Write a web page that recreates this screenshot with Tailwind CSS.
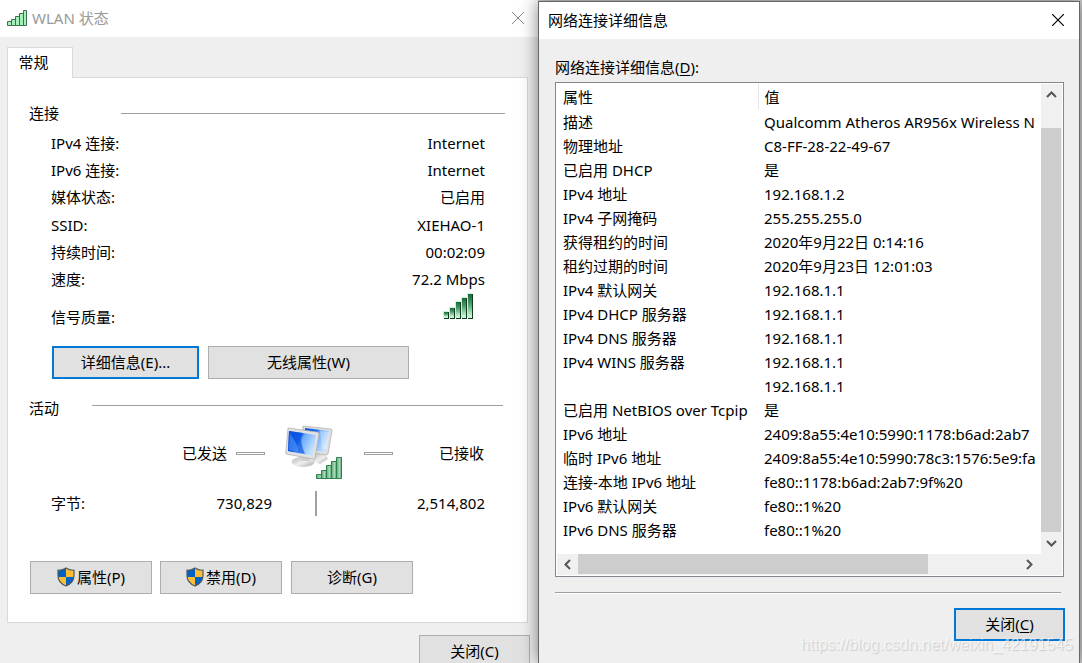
<!DOCTYPE html>
<html lang="zh-CN">
<head>
<meta charset="utf-8">
<title>WLAN 状态</title>
<script src="https://cdn.jsdelivr.net/npm/@tailwindcss/browser@4"></script>
</head>
<body class="relative flex h-screen overflow-hidden bg-[#d0d0d0] font-['Noto_Sans','Noto_Sans_CJK_SC',sans-serif] text-[15px] leading-6 text-black">
<svg class="absolute h-0 w-0" aria-hidden="true">
  <defs>
    <linearGradient id="bar" x1="0" y1="0" x2="0" y2="1"><stop offset="0" stop-color="#0f6b34"/><stop offset=".4" stop-color="#479a67"/><stop offset="1" stop-color="#d0ffdc"/></linearGradient>
    <linearGradient id="bar2" x1="0" y1="0" x2="1" y2="0"><stop offset="0" stop-color="#5aa878"/><stop offset=".6" stop-color="#a9dcb6"/><stop offset="1" stop-color="#4c9869"/></linearGradient>
    <linearGradient id="screen" x1="0" y1="0" x2="1" y2=".5"><stop offset="0" stop-color="#0a4fe0"/><stop offset=".45" stop-color="#1c6cf2"/><stop offset=".55" stop-color="#6cabff"/><stop offset="1" stop-color="#c5e2ff"/></linearGradient>
    <linearGradient id="stand" x1="0" y1="0" x2="1" y2="1"><stop offset="0" stop-color="#b2b2b2"/><stop offset=".5" stop-color="#efefef"/><stop offset="1" stop-color="#a8a8a8"/></linearGradient>
    <symbol id="shield" viewBox="0 0 18 20">
      <path d="M9 1C6.500 2.800 3.800 3.400 1 3.200V8.500C1 13.500 4 17 9 19Z" fill="#0063c4"/>
      <path d="M9 1C11.500 2.800 14.200 3.400 17 3.200V8.500C17 13.500 14 17 9 19Z" fill="#ffbd35"/>
      <path d="M1 10H9V19C4.800 17.400 1.500 14.500 1 10Z" fill="#ffbd35"/>
      <path d="M9 10H17C16.500 14.500 13.200 17.400 9 19Z" fill="#0063c4"/>
      <path d="M9 1C6.500 2.800 3.800 3.400 1 3.200V8.500C1 13.500 4 17 9 19C14 17 17 13.500 17 8.500V3.200C14.200 3.400 11.500 2.800 9 1Z" fill="none" stroke="#505a5e" stroke-width="1.200"/>
    </symbol>
  </defs>
</svg>

<main class="flex h-screen min-w-0 flex-1 basis-[538px] flex-col bg-[#efefef]">
  <header class="flex h-[37px] shrink-0 items-center bg-white pb-px pl-[7px] pr-[14px] text-[#999]">
    <svg class="h-4 w-5" viewBox="0 0 20 16"><g fill="#a4f0b8" stroke="#3f6f50" stroke-width="1"><path d="M.5 11.500h4v4h-4zM4.500 9.500h4v6h-4zM8.500 6.500h4v9h-4zM12.500 3.500h4v12h-4zM16.500 .5h3v15h-3z"/></g></svg>
    <h1 class="ml-[5px] flex-1">WLAN 状态</h1>
    <button type="button" aria-label="关闭窗口"><svg class="h-3 w-3" viewBox="0 0 12 12" stroke="#888"><path d="M0 0 12 12M12 0 0 12"/></svg></button>
  </header>

  <div class="mt-[10px] flex pl-[7px]" role="tablist">
    <button type="button" role="tab" aria-selected="true" class="z-10 -mb-px h-[31px] w-[66px] border border-b-0 border-[#d9d9d9] bg-white pb-0.5 pr-[13px] leading-none">常规</button>
  </div>

  <section class="ml-[7px] mr-[10px] h-[546px] shrink-0 border border-[#d9d9d9] bg-white pl-[21px] pr-[22px] pt-[23px]">
    <div class="flex items-center"><h2 class="w-[92px]">连接</h2><div class="h-px flex-1 bg-[#a0a0a0]"></div></div>
    <dl class="mt-1 grid h-[164px] grid-rows-6 items-center pl-[22px] pr-5">
      <div class="flex justify-between"><dt>IPv4 连接:</dt><dd>Internet</dd></div>
      <div class="flex justify-between"><dt>IPv6 连接:</dt><dd>Internet</dd></div>
      <div class="flex justify-between"><dt>媒体状态:</dt><dd>已启用</dd></div>
      <div class="flex justify-between"><dt>SSID:</dt><dd>XIEHAO-1</dd></div>
      <div class="flex justify-between"><dt>持续时间:</dt><dd>00:02:09</dd></div>
      <div class="flex justify-between"><dt>速度:</dt><dd>72.2 Mbps</dd></div>
    </dl>
    <div class="flex h-[53px] items-start justify-between pl-[22px] pr-[31px]">
      <span class="pt-3">信号质量:</span>
      <svg class="h-[26px] w-8" viewBox="0 0 32 26" role="img" aria-label="信号强"><path d="M2 19h5v7H2zM8 15h5v11H8zM14 9h5v17h-5zM20 5h5v21h-5zM26 1h5v25h-5z" fill="#183a25"/><path d="M1 18h5v7H1zM7 14h5v11H7zM13 8h5v17h-5zM19 4h5v21h-5zM25 0h5v25h-5z" fill="#c4f5d0"/><g fill="url(#bar)"><path d="M2 19h4v5H2z"/><path d="M8 15h4v9H8z"/><path d="M14 9h4v15h-4z"/><path d="M20 5h4v19h-4z"/><path d="M26 1h4v23h-4z"/></g></svg>
    </div>
    <div class="flex gap-[9px] pl-[23px]">
      <button type="button" class="h-[33px] w-[147px] border-2 border-[#0078d7] bg-[#e1e1e1] pb-0.5">详细信息(E)...</button>
      <button type="button" class="h-[33px] w-[201px] border border-[#adadad] bg-[#e1e1e1] pb-0.5">无线属性(W)</button>
    </div>

    <div class="mt-3 flex h-8 items-center"><h2 class="w-[63px] pt-0.5">活动</h2><div class="mb-1 mr-0.5 h-px flex-1 bg-[#a0a0a0]"></div></div>
    <div class="mt-px flex h-[58px] items-center pl-[153px] pr-[21px]">
      <span>已发送</span>
      <span class="ml-[9px] h-[3px] w-[29px] border border-[#a0a0a0]"></span>
      <svg class="ml-5 h-[58px] w-[58px]" viewBox="0 0 58 58" role="img" aria-label="网络活动">
        <path d="M30 29h10l3 6-8 5-7-3z" fill="url(#stand)"/>
        <path d="M18 2 46 5Q47 5 47 7L43 30Q42 31 40 31L17 27Z" fill="#dedede" stroke="#aaa" stroke-width=".7"/>
        <path d="M20 4 44 7 41 28 20 25Z" fill="url(#screen)"/>
        <path d="M35 7 44 8 42 26 37 25Z" fill="#fff" opacity=".3"/>
        <ellipse cx="18" cy="38" rx="11.500" ry="5" fill="url(#stand)"/>
        <path d="M16 29h9v8h-9z" fill="#cecece"/>
        <path d="M3 4 32 8Q34 8 34 10L30 35Q29 36 28 35L1 30Q0 29 1 27Z" fill="#e1e1e1" stroke="#aaa" stroke-width=".7"/>
        <path d="M4 7 31 11 28 32 3 27Z" fill="url(#screen)"/>
        <path d="M4 7 18 9C14 13 17 22 20 30L3 27Z" fill="#0950df" opacity=".65"/>
        <path d="M5 9C8 16 13 18 13 28L4 26Z" fill="#64adff" opacity=".45"/>
        <g fill="url(#bar2)" stroke="#2f8050" stroke-width="1"><path d="M31.500 50.500h6v4h-6z"/><path d="M36.500 46.500h5v8h-5z"/><path d="M41.500 41.500h5v13h-5z"/><path d="M46.500 37.500h5v17h-5z"/><path d="M51.500 33.500h5v21h-5z"/></g>
      </svg>
      <span class="ml-[21px] h-[3px] w-[29px] border border-[#a0a0a0]"></span>
      <span class="ml-auto">已接收</span>
    </div>
    <div class="mt-[7px] flex h-7 items-center pl-[22px] pr-5">
      <span class="w-[120px]">字节:</span>
      <span class="w-[101px] text-right">730,829</span>
      <span class="ml-[43px] h-[25px] w-0.5 bg-[#a0a0a0]"></span>
      <span class="ml-auto">2,514,802</span>
    </div>
    <div class="mt-11 flex gap-2 pl-px">
      <button type="button" class="flex h-[33px] w-[122px] items-center justify-center border border-[#adadad] bg-[#e1e1e1] pb-0.5"><svg class="mr-0.5 h-5 w-[18px]"><use href="#shield"/></svg>属性(P)</button>
      <button type="button" class="flex h-[33px] w-[122px] items-center justify-center border border-[#adadad] bg-[#e1e1e1] pb-0.5"><svg class="mr-0.5 h-5 w-[18px]"><use href="#shield"/></svg>禁用(D)</button>
      <button type="button" class="ml-px h-[33px] w-[122px] border border-[#adadad] bg-[#e1e1e1] pb-0.5">诊断(G)</button>
    </div>
  </section>
  <div class="mt-3 flex justify-end pr-2">
    <button type="button" class="h-[33px] w-[111px] border border-[#adadad] bg-[#e1e1e1] pb-0.5">关闭(C)</button>
  </div>
</main>

<aside class="z-10 mr-[2px] mt-px flex min-w-0 flex-1 basis-[542px] flex-col border border-b-0 border-[#666] bg-[#efefef] shadow-[0_0_16px_rgba(0,0,0,0.5)]">
  <header class="flex h-[37px] shrink-0 items-center justify-between bg-white pb-0.5 pl-[9px] pr-[15px]">
    <h2>网络连接详细信息</h2>
    <button type="button" aria-label="关闭对话框"><svg class="h-3 w-3" viewBox="0 0 12 12" stroke="#000" stroke-width="1.200"><path d="M0 0 12 12M12 0 0 12"/></svg></button>
  </header>
  <div class="flex flex-col pl-4 pr-[14px] pt-4">
    <h3 id="details">网络连接详细信息(<u class="underline-offset-2">D</u>):</h3>
    <div class="mr-px mt-[3px] grid h-[495px] grid-cols-[minmax(0,1fr)_21px] grid-rows-[minmax(0,1fr)_21px] border border-[#828790] bg-white p-px">
      <div class="overflow-hidden">
        <table aria-labelledby="details" class="w-full table-fixed whitespace-nowrap text-left">
          <thead><tr class="h-[26px]"><th class="w-[201px] border-r border-[#e5e5e5] p-0 pl-[6px] font-normal">属性</th><th class="p-0 pl-[6px] font-normal">值</th></tr></thead>
          <tbody class="[&_td]:h-6 [&_td]:p-0 [&_td]:pl-[6px]">
            <tr><td>描述</td><td>Qualcomm Atheros AR956x Wireless N</td></tr>
            <tr><td>物理地址</td><td>C8-FF-28-22-49-67</td></tr>
            <tr><td>已启用 DHCP</td><td>是</td></tr>
            <tr><td>IPv4 地址</td><td>192.168.1.2</td></tr>
            <tr><td>IPv4 子网掩码</td><td>255.255.255.0</td></tr>
            <tr><td>获得租约的时间</td><td>2020年9月22日 0:14:16</td></tr>
            <tr><td>租约过期的时间</td><td>2020年9月23日 12:01:03</td></tr>
            <tr><td>IPv4 默认网关</td><td>192.168.1.1</td></tr>
            <tr><td>IPv4 DHCP 服务器</td><td>192.168.1.1</td></tr>
            <tr><td>IPv4 DNS 服务器</td><td>192.168.1.1</td></tr>
            <tr><td>IPv4 WINS 服务器</td><td>192.168.1.1</td></tr>
            <tr><td></td><td>192.168.1.1</td></tr>
            <tr><td>已启用 NetBIOS over Tcpip</td><td>是</td></tr>
            <tr><td>IPv6 地址</td><td>2409:8a55:4e10:5990:1178:b6ad:2ab7</td></tr>
            <tr><td>临时 IPv6 地址</td><td>2409:8a55:4e10:5990:78c3:1576:5e9:fa</td></tr>
            <tr><td>连接-本地 IPv6 地址</td><td>fe80::1178:b6ad:2ab7:9f%20</td></tr>
            <tr><td>IPv6 默认网关</td><td>fe80::1%20</td></tr>
            <tr><td>IPv6 DNS 服务器</td><td>fe80::1%20</td></tr>
          </tbody>
        </table>
      </div>
      <div class="flex flex-col items-center bg-[#f0f0f0] pr-px">
        <button type="button" aria-label="向上滚动" class="flex h-[44px] w-5 justify-center pt-[7px]"><svg class="h-[7px] w-[11px]" viewBox="0 0 11 7" fill="none" stroke="#555" stroke-width="2"><path d="m1 6 4.500-4.500L10 6"/></svg></button>
        <div class="w-full flex-1 bg-[#cdcdcd]"></div>
        <button type="button" aria-label="向下滚动" class="flex h-[22px] w-5 items-center justify-center"><svg class="h-[7px] w-[11px]" viewBox="0 0 11 7" fill="none" stroke="#555" stroke-width="2"><path d="m1 1 4.500 4.500L10 1"/></svg></button>
      </div>
      <div class="flex bg-[#f0f0f0] pb-px">
        <button type="button" aria-label="向左滚动" class="flex h-5 w-[21px] items-center justify-center"><svg class="h-[11px] w-[7px]" viewBox="0 0 7 11" fill="none" stroke="#555" stroke-width="2"><path d="M6 1 1.500 5.500 6 10"/></svg></button>
        <div class="flex-1 bg-[#cdcdcd]"></div>
        <button type="button" aria-label="向右滚动" class="flex h-5 w-[113px] items-center justify-end pr-2"><svg class="h-[11px] w-[7px]" viewBox="0 0 7 11" fill="none" stroke="#555" stroke-width="2"><path d="m1 1 4.500 4.500L1 10"/></svg></button>
      </div>
      <div class="bg-[#f0f0f0]"></div>
    </div>
    <div class="mr-[4px] mt-[15px] h-0.5 border-b border-t border-b-white border-t-[#a0a0a0]"></div>
    <button type="button" class="mt-[14px] h-[33px] w-[111px] self-end border-2 border-[#0078d7] bg-[#e1e1e1] pb-0.5">关闭(<u class="underline-offset-2">C</u>)</button>
  </div>
</aside>
<p class="absolute bottom-[6px] right-[9px] z-20 font-['Liberation_Sans',sans-serif] text-base text-white/60 [text-shadow:1px_1px_1px_rgba(0,0,0,0.15)]">https://blog.csdn.net/weixin_42191545</p>
</body>
</html>
